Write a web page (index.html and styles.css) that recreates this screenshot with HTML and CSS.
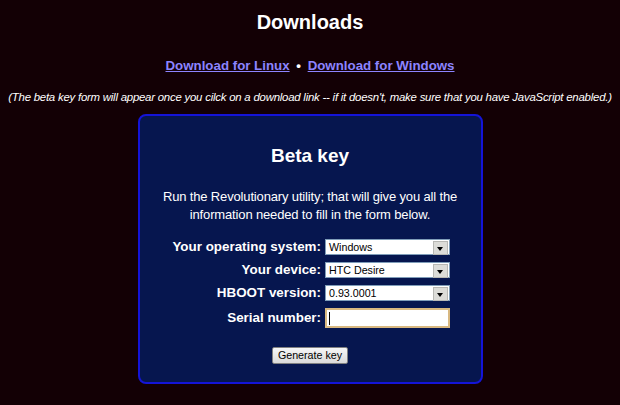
FILE: index.html
```html
<!DOCTYPE html>
<html lang="en">
<head>
	<meta charset="UTF-8">
	<title>Downloads</title>
	<link rel="stylesheet" href="styles.css">
</head>
<body>
	<h1>Downloads</h1>
	<p class="links">
		<a href="#">Download for Linux</a>
		<span class="dot">&bull;</span>
		<a href="#">Download for Windows</a>
	</p>
	<p class="note">(The beta key form will appear once you cilck on a download link -- if it doesn't, make sure that you have JavaScript enabled.)</p>

	<div class="betaBox">
		<h2>Beta key</h2>
		<p class="intro">Run the Revolutionary utility; that will give you all the information needed to fill in the form below.</p>
		<div class="form">
			<label for="os">Your operating system:</label>
			<div class="select"><span>Windows</span><i></i></div>
			<label for="device">Your device:</label>
			<div class="select"><span>HTC Desire</span><i></i></div>
			<label for="hboot">HBOOT version:</label>
			<div class="select"><span>0.93.0001</span><i></i></div>
			<label for="serial">Serial number:</label>
			<div class="serial"><span class="caret"></span></div>
		</div>
		<div class="actions">
			<button type="button">Generate key</button>
		</div>
	</div>
</body>
</html>
```

FILE: styles.css
```css
body{
	margin: 0;
	background-color: #130005;
	color: #fff;
	font-family: "Liberation Sans", Arial, sans-serif;
	text-align: center;
}
h1{
	margin: 0;
	padding-top: 11px;
	font-size: 20px;
	line-height: 23px;
}
.links{
	margin: 23px 0 0;
	font-size: 13.3px;
	font-weight: bold;
	line-height: 17px;
}
.links a{
	color: #8c84ff;
}
.dot{
	margin: 0 3px;
}
.note{
	margin: 16px 0 0;
	font-size: 11.4px;
	font-style: italic;
	letter-spacing: -0.22px;
	line-height: 14px;
	white-space: nowrap;
}
.betaBox{
	width: 341px;
	height: 266px;
	margin: 10px auto 0;
	border: 2px solid #1414d8;
	border-radius: 8px;
	background-color: #06164f;
}
h2{
	margin: 0;
	padding-top: 28px;
	font-size: 19px;
	line-height: 23px;
}
.intro{
	margin: 21px auto 0;
	width: 310px;
	font-size: 13px;
	letter-spacing: -0.15px;
	line-height: 18px;
}
.form{
	display: grid;
	grid-template-columns: 149px 125px;
	justify-content: center;
	align-items: center;
	column-gap: 4px;
	row-gap: 7px;
	margin: 15px 0 0 2px;
	font-size: 13.4px;
	font-weight: bold;
}
label{
	text-align: right;
	line-height: 16px;
	white-space: nowrap;
}
.select{
	display: flex;
	height: 16px;
	box-sizing: border-box;
	border: 1px solid #7f9db9;
	background: #fff;
	color: #000;
	font-size: 10.7px;
	font-weight: normal;
	text-align: left;
}
.select span{
	flex: 1;
	padding-left: 3px;
	line-height: 14px;
}
.select i{
	width: 13px;
	height: 12px;
	margin: 1px;
	background: #dcdcd8;
	border: 1px solid #b8b8b4;
	position: relative;
}
.select i:after{
	content: "";
	position: absolute;
	left: 3px;
	top: 5px;
	border-left: 3.5px solid transparent;
	border-right: 3.5px solid transparent;
	border-top: 4px solid #000;
}
.serial{
	height: 20px;
	box-sizing: border-box;
	border: 2px solid #d8b880;
	background: #fff;
	text-align: left;
	padding-left: 2px;
}
.caret{
	display: block;
	width: 1px;
	height: 13px;
	margin-top: 2px;
	background: #000;
}
.actions{
	margin-top: 17px;
}
button{
	font-family: "Liberation Sans", Arial, sans-serif;
	font-size: 10.7px;
	padding: 0 5px;
	height: 17px;
	line-height: 13px;
	border: 1px solid #808080;
	border-radius: 2px;
	background: linear-gradient(#f6f6f6, #dadada);
	color: #000;
}
```
